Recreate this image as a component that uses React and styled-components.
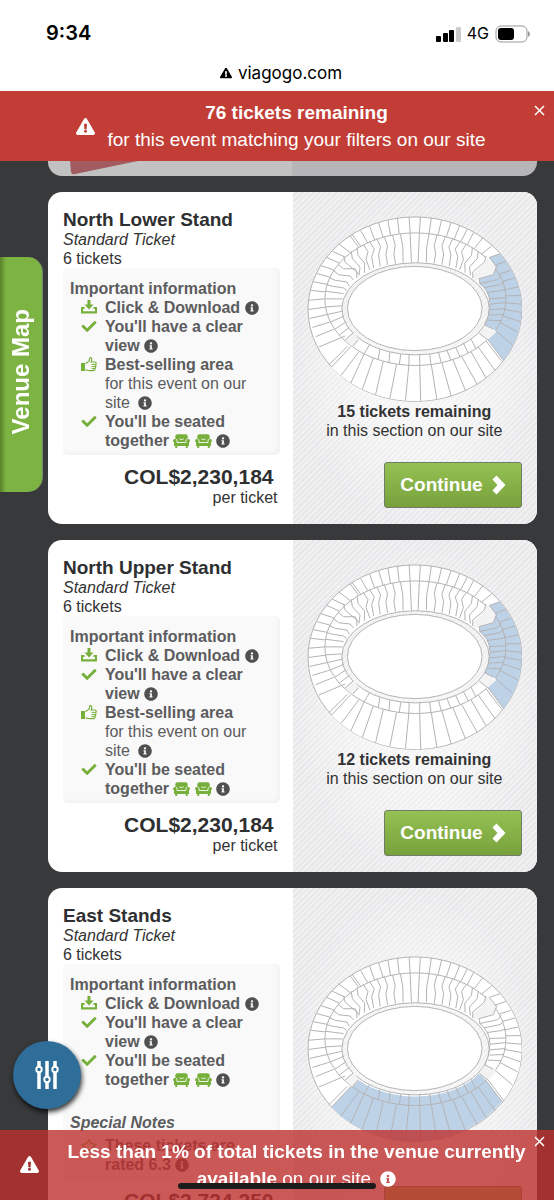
import React from 'react';
import styled, { createGlobalStyle } from 'styled-components';
import { FaInfoCircle, FaCheck, FaExclamationTriangle, FaRegStar } from 'react-icons/fa';

const GlobalStyle = createGlobalStyle`
    *{
        box-sizing: border-box;
    }
    body{
        margin: 0;
        background: #38393b;
        color: #333;
        font-family: "Liberation Sans", Arial, sans-serif;
        font-size: 16px;
        line-height: 19px;
    }
    button{
        font-family: inherit;
        border: 0;
        padding: 0;
        cursor: pointer;
    }
`;

const Screen = styled.div`
    height: 100vh;
    display: flex;
    flex-direction: column;
    overflow: hidden;
`;

const StatusBar = styled.div`
    background: #fff;
    color: #000;
    font-family: Inter, sans-serif;
    padding: 20px 24px 0 46px;
    height: 91px;
    flex: none;
`;

const StatusRow = styled.div`
    display: flex;
    align-items: center;
    justify-content: space-between;
    height: 27px;
    font-size: 20px;
    font-weight: 600;
`;

const StatusIcons = styled.div`
    display: flex;
    align-items: center;
    gap: 6px;
    font-size: 16px;
    font-weight: 400;
`;

const Address = styled.div`
    display: flex;
    align-items: center;
    justify-content: center;
    gap: 6px;
    margin: 16px 0 0 -14px;
    font-size: 17px;
    line-height: 20px;
`;

const Banner = styled.div`
    display: flex;
    align-items: center;
    flex: none;
    position: relative;
    color: #fff;
    font-size: 19px;
    line-height: 27px;
    text-align: center;
`;

const TopBanner = styled(Banner)`
    background: #c23d36;
    justify-content: center;
    gap: 12px;
    height: 70px;
    padding: 0 4px 0 12px;
`;

const BottomBanner = styled(Banner)`
    position: fixed;
    left: 0;
    right: 0;
    bottom: 0;
    align-items: flex-start;
    gap: 24px;
    height: 70px;
    padding: 8px 24px 0 20px;
    background: rgba(190, 48, 46, 0.8);
    z-index: 3;
    p{
        flex: 1;
    }
    > svg{
        margin-top: 17px;
        flex: none;
    }
    p svg{
        vertical-align: -2px;
        margin-left: 4px;
    }
`;

const BannerText = styled.p`
    margin: 0;
`;

const Close = styled.button`
    position: absolute;
    top: 14px;
    right: 9px;
    width: 11px;
    height: 11px;
    background: none;
    color: #fff;
    svg{
        display: block;
    }
`;

const BottomClose = styled(Close)`
    top: 6px;
`;

const HomeIndicator = styled.div`
    position: fixed;
    left: 50%;
    bottom: 11px;
    width: 198px;
    height: 6px;
    margin-left: -99px;
    border-radius: 3px;
    background: #1d1c1c;
    z-index: 4;
`;

const List = styled.main`
    display: flex;
    flex-direction: column;
    gap: 16px;
    padding: 0 17px 0 48px;
    flex: 1;
    min-height: 0;
    overflow: hidden;
`;

const SoldCard = styled.div`
    display: flex;
    flex: none;
    height: 15px;
    overflow: hidden;
    border-radius: 0 0 14px 14px;
    background: linear-gradient(90deg, #c2c2c2 50%, #b6b6b8 50%);
    svg{
        margin-left: 22px;
    }
`;

const Card = styled.article`
    display: grid;
    grid-template-columns: 1fr 1fr;
    flex: none;
    border-radius: 14px;
    overflow: hidden;
    background: #fff;
`;

const Details = styled.div`
    padding: 17px 12px 17px 15px;
`;

const Title = styled.h2`
    margin: 0;
    font-size: 19px;
    line-height: 21px;
    color: #2e2f31;
`;

const TicketType = styled.div`
    font-style: italic;
`;

const InfoBox = styled.section`
    margin: 0 1px 0 0;
    padding: 11px 4px 5px 7px;
    color: #5c5c5e;
    background: #f9f9f9;
    border-radius: 5px;
    box-shadow: inset -3px -3px 3px #f3f3f3;
`;

const InfoTitle = styled.h3`
    margin: ${props => props.$italic ? '24px 0 4px' : '0'};
    font-size: 16px;
    line-height: 19px;
    font-style: ${props => props.$italic ? 'italic' : 'normal'};
`;

const Features = styled.ul`
    list-style: none;
    margin: 0;
    padding: 0 0 0 11px;
`;

const Feature = styled.li`
    display: flex;
    gap: 8px;
    > svg{
        flex: none;
        margin-top: 2px;
        color: #77af3b;
        width: 16px;
    }
`;

const FeatureText = styled.div`
    svg{
        vertical-align: -2px;
    }
`;

const InfoIcon = styled(FaInfoCircle)`
    width: 14px;
    height: 14px;
    color: #505052;
    margin-left: ${props => props.$wide ? '4px' : '0'};
`;

const Price = styled.div`
    margin-top: 10px;
    padding-right: 7px;
    text-align: right;
    font-size: 21px;
    line-height: 23px;
    font-weight: bold;
    color: #2e2f31;
`;

const PerTicket = styled.div`
    padding-right: 3px;
    text-align: right;
`;

const Preview = styled.div`
    display: flex;
    flex-direction: column;
    padding: 0 15px 16px 14px;
    background:
        repeating-linear-gradient(135deg, rgba(255, 255, 255, 0.35) 0 2px, rgba(225, 225, 229, 0.1) 2px 4px),
        radial-gradient(closest-side, #f6f6f7 40%, #e9e9eb 100%) #e9e9eb;
`;

const MapArea = styled.div`
    flex: 1;
    display: flex;
    flex-direction: column;
    justify-content: center;
    padding-top: ${props => props.$plain ? '24px' : '2px'};
    text-align: center;
    > svg{
        display: block;
        width: 100%;
    }
`;

const Continue = styled.button`
    display: flex;
    align-items: center;
    justify-content: center;
    gap: 9px;
    align-self: flex-end;
    width: 138px;
    height: 46px;
    border: 1px solid #6f7d68;
    border-radius: 3px;
    background: linear-gradient(#95c153, #78a13c);
    color: #fff;
    font-size: 19px;
    font-weight: bold;
`;

const VenueMap = styled.button`
    position: fixed;
    left: 0;
    top: 257px;
    width: 43px;
    height: 235px;
    border-right: 1px solid #76886a;
    border-radius: 0 15px 15px 0;
    background: linear-gradient(90deg, #588029, #7cb342 6px);
    color: #fff;
    font-size: 24px;
    font-weight: bold;
    z-index: 2;
    span{
        writing-mode: vertical-rl;
        transform: rotate(180deg);
    }
`;

const FilterButton = styled.button`
    position: fixed;
    left: 13px;
    bottom: 91px;
    display: flex;
    align-items: center;
    justify-content: center;
    width: 68px;
    height: 68px;
    border-radius: 50%;
    background: #2f6e99;
    box-shadow: 1px 3px 5px rgba(0, 0, 0, 0.8);
    z-index: 2;
`;

const CloseIcon = () => (
    <svg width="11" height="11" viewBox="0 0 11 11" stroke="currentColor" strokeWidth="1.5">
        <path d="M1 1l9 9M10 1l-9 9" />
    </svg>
);

const ChevronIcon = () => (
    <svg width="14" height="20" viewBox="0 0 14 20" fill="currentColor">
        <path d="M4.500 0.500L13.500 10L4.500 19.500L0.500 15.500L5.500 10L0.500 4.500z" />
    </svg>
);

const DownloadIcon = () => (
    <svg width="16" height="14" viewBox="0 0 16 14" fill="currentColor">
        <path d="M6.500 0h3v4.500h3L8 9.500 3.500 4.500h3z" />
        <path d="M0 7h3.500v2H2v2.200h12V9h-1.500V7H16v6.500H0z" />
    </svg>
);

const ThumbIcon = () => (
    <svg width="16" height="15" viewBox="0 0 16 15" fill="none" stroke="currentColor">
        <path d="M0 6h4v8H0z" fill="currentColor" stroke="none" />
        <path d="M4.500 6.500L8 4.200c.5-1 .2-3.200 1.300-3.500 1.600-.3 1.800 2 .9 4.300h3.800c1.600 0 1.600 2.300.2 2.400 1.200.3 1 2.100-.2 2.200.9.4.7 2-.4 2.100.6.6.2 1.900-.8 1.900H8.500c-1.500 0-2.500-.6-4-.7" strokeWidth="1.200" />
        <path d="M10.500 7.400h3.500M10.500 9.600H14M10.500 11.700h3" />
    </svg>
);

const SeatIcon = () => (
    <svg width="17" height="14" viewBox="0 0 17 14" fill="#77af3b">
        <path d="M2.300 5V2.200Q2.300.2 4.500.2h8q2.200 0 2.200 2V5Q17 4.800 17 6.500q0 1.200-1 1.700v3.900h-1.300V14h-1.900v-1.900H4.200V14H2.300v-1.900H1V8.200Q0 7.700 0 6.500 0 4.800 2.300 5z" />
        <path d="M2.600 4.800Q4 5.300 4 6.800v1.700h9V6.800q0-1.500 1.400-2M6.300 4.900q2.200 1.400 4.400 0" fill="none" stroke="#f9f9f9" strokeWidth=".9" />
    </svg>
);

const SlidersIcon = () => (
    <svg width="24" height="28" viewBox="0 0 24 28" fill="none" stroke="#fff">
        <path d="M4 0v5M4 11v17M12 0v15M12 21v7M20 0v5M20 11v17" strokeWidth="3.500" />
        <circle cx="4" cy="8.500" r="2.700" strokeWidth="2" />
        <circle cx="12" cy="18.500" r="2.700" strokeWidth="2" />
        <circle cx="20" cy="8.500" r="2.700" strokeWidth="2" />
    </svg>
);

// Tier dividers, [outer x, outer y, inner x, inner y]
const OUTER_TOP = [
    [358, 94, 361, 142], [392, 94, 389, 142], [425, 98, 418, 145], [456, 103, 445, 149], [484, 112, 470, 154],
    [510, 121, 494, 161], [533, 131, 514, 168], [553, 140, 533, 178], [580, 157, 555, 189], [607, 181, 575, 207],
    [323, 98, 328, 145], [294, 104, 302, 150], [266, 112, 280, 156], [239, 122, 254, 164], [212, 135, 233, 172],
    [187, 148, 212, 182], [180, 151, 205, 184], [146, 175, 181, 202], [126, 197, 165, 215], [108, 215, 147, 233],
    [92, 241, 130, 253], [80, 265, 118, 275], [68, 289, 110, 297], [60, 315, 105, 320], [55, 345, 104, 341],
    [54, 373, 106, 366], [58, 400, 112, 388], [66, 427, 119, 411], [76, 455, 130, 433], [86, 486, 165, 453], [116, 540, 172, 484]
];
const OUTER_NORTH = [
    [632, 205, 600, 216], [650, 228, 616, 240], [665, 255, 630, 266], [677, 278, 640, 288], [687, 305, 646, 314],
    [694, 331, 650, 332], [696, 357, 650, 353], [697, 382, 646, 373], [694, 410, 641, 392], [684, 440, 632, 412],
    [670, 480, 620, 438], [643, 527, 595, 463]
];
const OUTER_SOUTH = [
    [124, 547, 183, 484], [152, 573, 207, 500], [182, 595, 222, 508], [217, 614, 250, 519], [257, 629, 280, 530],
    [300, 641, 320, 539], [347, 648, 357, 543], [393, 650, 390, 543], [442, 645, 425, 540], [485, 635, 457, 534],
    [528, 618, 490, 524], [563, 598, 516, 514], [590, 579, 545, 501], [617, 557, 567, 487], [638, 530, 590, 468]
];
const INNER_SOUTH = [
    [205, 464, 188, 484], [238, 480, 222, 508], [270, 493, 265, 523], [300, 502, 297, 535], [333, 508, 328, 540],
    [358, 510, 357, 543], [390, 510, 390, 543], [420, 507, 424, 540], [447, 503, 455, 534], [472, 496, 484, 526],
    [498, 487, 512, 516], [522, 476, 537, 505], [545, 463, 560, 493], [570, 445, 593, 463]
];
const INNER_WEST = [
    [106, 318, 160, 325], [105, 341, 157, 341], [107, 365, 155, 362], [112, 388, 157, 378], [122, 410, 162, 393],
    [135, 432, 168, 410], [150, 448, 178, 427], [165, 465, 190, 443]
];
const INNER_TOP = [
    '389,142 385,231', '418,145 411,185 410,231', '442,148 434,180 438,205 433,235', '467,153 457,181 462,206 457,238',
    '490,159 478,184 484,208 479,243', '512,167 497,191 505,214 499,248', '531,176 516,198 522,222 510,254',
    '549,186 546,210 526,233 527,262', '567,197 563,220 540,245 543,270', '590,211 585,230 550,260 550,278'
];
const INNER_CORNER = [
    '143,236 160,250 195,250 205,268', '128,254 145,268 180,272 190,284', '117,277 135,285 170,290 178,303',
    '109,298 128,303 160,308 170,315'
];
const INNER_NORTH = [
    '570,295 625,283 636,270', '582,308 632,298 642,290', '592,322 635,316 648,312', '600,340 650,338',
    '602,357 650,352', '602,374 648,370', '601,390 644,388', '596,405 636,407'
];

const toPath = lines => lines.map(([a, b, c, d]) => `M${a} ${b}L${c} ${d}`).join('');
const toPoly = lines => lines.map(l => `M${l}`).join('');

const Stadium = ({ stand }) => {
    const north = stand === 'north' ? '#bed2e7' : '#fff';
    const east = stand === 'east' ? '#bed2e7' : '#fff';
    return (
        <svg viewBox="50 91 650 562" fill="none" stroke="#b2b2b4" strokeWidth="3" role="img" aria-label="Seating plan">
            <path
                d="M53 372a322.500 278 0 1 0 645 0a322.500 278 0 1 0-645 0zM155 371a222.500 139 0 1 0 445 0a222.500 139 0 1 0-445 0z"
                fill="#fff" fillRule="evenodd"
            />
            <path d="M632 205A322.500 278 0 0 1 643 527L595 463Q612 445 620 438L587 420Q602 390 602 355Q600 315 572 296L569 280L612 268L618 245L600 216z" fill={north} stroke="none" />
            <path d="M124 547A322.500 278 0 0 0 638 530L590 466L570 445A222.500 139 0 0 1 205 464L183 484z" fill={east} stroke="none" />
            <ellipse cx="377" cy="342" rx="273" ry="200" />
            <g fill="#f3f3f4" stroke="none">
                <path d="M592 214L620 240L612 268L569 280L556 286L546 272L562 255L586 232z" />
                <path d="M590 422L612 432L622 440L597 463L566 446z" />
                <path d="M190 440L208 465L186 486L165 465z" />
            </g>
            <path d={toPath([...OUTER_TOP, ...OUTER_NORTH, ...OUTER_SOUTH, ...INNER_SOUTH, ...INNER_WEST])} />
            <path d={toPoly([...INNER_TOP, ...INNER_CORNER, ...INNER_NORTH])} />
            <path d={toPoly(INNER_TOP)} transform="translate(750 0) scale(-1 1)" />
            <path d="M600 216L622 243L612 268L569 280L572 296Q600 315 602 355Q602 390 587 420L612 432" />
            <ellipse cx="375" cy="370" rx="203" ry="127" fill="#fff" />
        </svg>
    );
};

const Check = ({ children }) => (
    <Feature><FaCheck size={15} /><FeatureText>{children}</FeatureText></Feature>
);

const TicketCard = ({ title, stand, remaining, price, bestSelling, rating }) => (
    <Card>
        <Details>
            <Title>{title}</Title>
            <TicketType>Standard Ticket</TicketType>
            <div>6 tickets</div>
            <InfoBox>
                <InfoTitle>Important information</InfoTitle>
                <Features>
                    <Feature><DownloadIcon /><FeatureText><b>Click &amp; Download</b> <InfoIcon /></FeatureText></Feature>
                    <Check><b>You'll have a clear view</b> <InfoIcon /></Check>
                    {bestSelling && (
                        <Feature>
                            <ThumbIcon />
                            <FeatureText><b>Best-selling area</b><br />for this event on our site <InfoIcon $wide /></FeatureText>
                        </Feature>
                    )}
                    <Check><b>You'll be seated together</b> <SeatIcon /> <SeatIcon /> <InfoIcon /></Check>
                </Features>
                {rating && (
                    <>
                        <InfoTitle $italic>Special Notes</InfoTitle>
                        <Features>
                            <Feature><FaRegStar size={16} /><FeatureText><b>These tickets are rated {rating}</b> <InfoIcon /></FeatureText></Feature>
                        </Features>
                    </>
                )}
            </InfoBox>
            <Price>{price}</Price>
            <PerTicket>per ticket</PerTicket>
        </Details>
        <Preview>
            <MapArea $plain={!remaining}>
                <Stadium stand={stand} />
                {remaining && <div><b>{remaining} tickets remaining</b><br />in this section on our site</div>}
            </MapArea>
            <Continue>Continue <ChevronIcon /></Continue>
        </Preview>
    </Card>
);

const App = () => (
    <Screen>
        <GlobalStyle />
        <StatusBar>
            <StatusRow>
                <span>9:34</span>
                <StatusIcons>
                    <svg width="25" height="16" viewBox="0 0 25 16">
                        <rect x="0" y="10" width="5" height="6" rx="1" />
                        <rect x="7" y="7" width="5" height="9" rx="1" />
                        <rect x="13" y="4" width="5" height="12" rx="1" />
                        <rect x="20" y="1" width="5" height="15" rx="1" fill="#ccc" />
                    </svg>
                    <span>4G</span>
                    <svg width="35" height="18" viewBox="0 0 35 18">
                        <rect x="1" y="1" width="31" height="16" rx="5" fill="none" stroke="#999" />
                        <rect x="3" y="3" width="16" height="12" rx="3" />
                        <path d="M33 6q2 1 2 3t-2 3z" fill="#999" />
                    </svg>
                </StatusIcons>
            </StatusRow>
            <Address><FaExclamationTriangle size={12} />viagogo.com</Address>
        </StatusBar>
        <TopBanner>
            <FaExclamationTriangle size={19} />
            <BannerText><b>76 tickets remaining</b><br />for this event matching your filters on our site</BannerText>
            <Close aria-label="Close"><CloseIcon /></Close>
        </TopBanner>
        <List>
            <SoldCard>
                <svg width="70" height="15" viewBox="0 0 70 15"><path d="M0 0h68L5 13Q2 14 1 11z" fill="#a25c5f" /></svg>
            </SoldCard>
            <TicketCard title="North Lower Stand" stand="north" remaining={15} price="COL$2,230,184" bestSelling />
            <TicketCard title="North Upper Stand" stand="north" remaining={12} price="COL$2,230,184" bestSelling />
            <TicketCard title="East Stands" stand="east" price="COL$2,724,250" rating="6.3" />
        </List>
        <VenueMap><span>Venue Map</span></VenueMap>
        <FilterButton aria-label="Filters"><SlidersIcon /></FilterButton>
        <BottomBanner>
            <FaExclamationTriangle size={19} />
            <BannerText>
                <b>Less than 1% of total tickets in the venue currently available</b> on our site <FaInfoCircle size={16} />
            </BannerText>
            <BottomClose aria-label="Close"><CloseIcon /></BottomClose>
        </BottomBanner>
        <HomeIndicator />
    </Screen>
);

export default App;
